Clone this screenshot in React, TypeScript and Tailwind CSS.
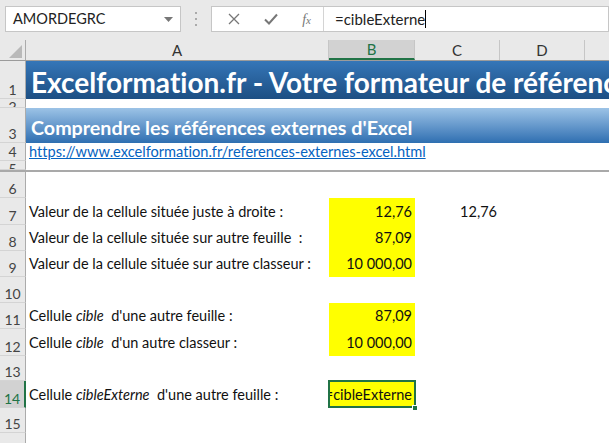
import React from 'react'

const font = { fontFamily: 'Lato, "Open Sans", sans-serif' }

interface Row {
  n: number
  h: string
  label?: React.ReactNode
  b?: string
  yellow?: boolean
  c?: string
  selected?: boolean
}

const rows: Row[] = [
  { n: 6, h: 'h-[26px]' },
  { n: 7, h: 'h-[27px]', label: 'Valeur de la cellule située juste à droite :', b: '12,76', yellow: true, c: '12,76' },
  { n: 8, h: 'h-[26px]', label: 'Valeur de la cellule située sur autre feuille  :', b: '87,09', yellow: true },
  { n: 9, h: 'h-[26px]', label: 'Valeur de la cellule située sur autre classeur :', b: '10 000,00', yellow: true },
  { n: 10, h: 'h-[26px]' },
  { n: 11, h: 'h-[26px]', label: <>Cellule <i>cible</i>&nbsp; d'une autre feuille :</>, b: '87,09', yellow: true },
  { n: 12, h: 'h-[27px]', label: <>Cellule <i>cible</i>&nbsp; d'un autre classeur :</>, b: '10 000,00', yellow: true },
  { n: 13, h: 'h-[25px]' },
  { n: 14, h: 'h-[27px]', label: <>Cellule <i>cibleExterne</i>&nbsp; d'une autre feuille :</>, b: '=cibleExterne', yellow: true, selected: true },
  { n: 15, h: 'h-[25px]' },
  { n: 16, h: 'h-[26px]' },
]

function RowHead({ n, active, short }: { n: number; active?: boolean; short?: boolean }) {
  return (
    <div
      className={
        'w-[26px] shrink-0 flex justify-center border-b border-[#d4d4d4] text-[14px] leading-none overflow-hidden ' +
        (short ? 'items-start pt-[1px] ' : 'items-end pb-[1px] ') +
        (active
          ? 'bg-[#d2d2d2] text-[#217346] border-r-2 border-r-[#217346]'
          : 'bg-[#e9e9e9] text-[#444] border-r border-r-[#ababab]')
      }
    >
      {n}
    </div>
  )
}

export default function App() {
  return (
    <div className="w-[609px] h-[443px] overflow-hidden bg-white text-[#111] [font-variant-ligatures:none]" style={font}>
      {/* formula bar */}
      <div className="h-[40px] bg-[#e9e9e9] flex items-start pt-[6px] pl-[5px]">
        <div className="w-[176px] h-[26px] bg-white border border-[#c6c6c6] flex items-center justify-between pl-[7px] pr-[7px] text-[14.5px] text-[#222]">
          <span>AMORDEGRC</span>
          <svg width="9" height="5" viewBox="0 0 9 5"><path d="M0 0h9L4.5 5z" fill="#777" /></svg>
        </div>
        <div className="w-[30px] h-[26px] flex flex-col items-center justify-center gap-[4px]">
          <span className="w-[2px] h-[2px] bg-[#aaa]" />
          <span className="w-[2px] h-[2px] bg-[#aaa]" />
          <span className="w-[2px] h-[2px] bg-[#aaa]" />
        </div>
        <div className="flex-1 h-[26px] bg-white border border-[#c6c6c6] flex items-center">
          <div className="w-[112px] h-full flex items-center justify-around border-r border-[#d4d4d4] pl-[4px]">
            <svg width="12" height="12" viewBox="0 0 12 12"><path d="M1 1l10 10M11 1L1 11" stroke="#777" strokeWidth="1.3" /></svg>
            <svg width="14" height="12" viewBox="0 0 14 12"><path d="M1 6.5l4 4L13 1.5" stroke="#777" strokeWidth="2" fill="none" /></svg>
            <span className="text-[14px] italic text-[#777]" style={{ fontFamily: '"Liberation Serif", serif' }}>
              f<span className="text-[11px]">x</span>
            </span>
          </div>
          <div className="pl-[11px] text-[15px] text-[#222] flex items-center">
            <span>=cibleExterne</span>
            <span className="w-px h-[18px] bg-black" />
          </div>
        </div>
      </div>

      {/* column headers */}
      <div className="h-[21px] flex bg-[#e9e9e9] border-b border-[#9b9b9b] text-[15px] text-[#333]">
        <div className="w-[26px] shrink-0 border-r border-[#ababab] flex items-end justify-end pr-[3px] pb-[2px]">
          <svg width="13" height="13" viewBox="0 0 13 13"><path d="M13 0v13H0z" fill="#b9b9b9" /></svg>
        </div>
        <div className="w-[303px] shrink-0 border-r border-[#c6c6c6] flex items-center justify-center">A</div>
        <div className="w-[86px] shrink-0 bg-[#d2d2d2] border-r border-[#c6c6c6] border-b-2 border-b-[#217346] text-[#217346] flex items-center justify-center">B</div>
        <div className="w-[85px] shrink-0 border-r border-[#c6c6c6] flex items-center justify-center">C</div>
        <div className="w-[85px] shrink-0 border-r border-[#c6c6c6] flex items-center justify-center">D</div>
        <div className="flex-1" />
      </div>

      {/* row 1 */}
      <div className="h-[38px] flex">
        <RowHead n={1} />
        <div className="flex-1 bg-gradient-to-b from-[#3576b8] to-[#1d4f83] text-white font-bold text-[28px] leading-none flex items-center pl-[5px] pt-[3px] whitespace-nowrap overflow-hidden">
          <span>Excelformation.fr - Votre formateur de référence</span>
        </div>
      </div>
      {/* row 2 */}
      <div className="h-[9px] flex">
        <RowHead n={2} short />
        <div className="flex-1" />
      </div>
      {/* row 3 */}
      <div className="h-[35px] flex">
        <RowHead n={3} />
        <div className="flex-1 bg-gradient-to-b from-[#9cc3e6] to-[#2e6fb1] text-white font-bold text-[19.7px] leading-none flex items-center pl-[5px] pt-[4px] whitespace-nowrap">
          <span>Comprendre les références externes d'Excel</span>
        </div>
      </div>
      {/* row 4 */}
      <div className="h-[18px] flex">
        <RowHead n={4} />
        <div className="flex-1 pl-[3px] text-[14.6px] leading-none flex items-end pb-[1px]">
          <span className="text-[#0563c1] underline">https://www.excelformation.fr/references-externes-excel.html</span>
        </div>
      </div>
      {/* row 5 + frozen divider */}
      <div className="h-[11px] flex border-b-2 border-[#a9a9a9]">
        <RowHead n={5} short />
        <div className="flex-1" />
      </div>

      {rows.map((r) => (
        <div key={r.n} className={r.h + ' flex text-[14.5px]'}>
          <RowHead n={r.n} active={r.selected} />
          <div className="w-[303px] shrink-0 flex items-center pl-[3px] whitespace-pre">
            <span>{r.label}</span>
          </div>
          <div className="w-[86px] shrink-0 relative">
            {r.yellow && (
              <div className="absolute inset-0 bg-[#ffff00] flex items-center justify-end pr-[3px] overflow-hidden whitespace-nowrap">
                <span>{r.b}</span>
              </div>
            )}
            {r.selected && (
              <>
                <div className="absolute -left-[1px] -top-[1px] -right-[1px] bottom-0 border-2 border-[#217346]" />
                <div className="absolute -right-[3px] -bottom-[3px] w-[6px] h-[6px] bg-[#217346] border border-white" />
              </>
            )}
          </div>
          <div className="w-[85px] shrink-0 flex items-center justify-end pr-[3px]">
            <span>{r.c}</span>
          </div>
          <div className="flex-1" />
        </div>
      ))}
    </div>
  )
}
